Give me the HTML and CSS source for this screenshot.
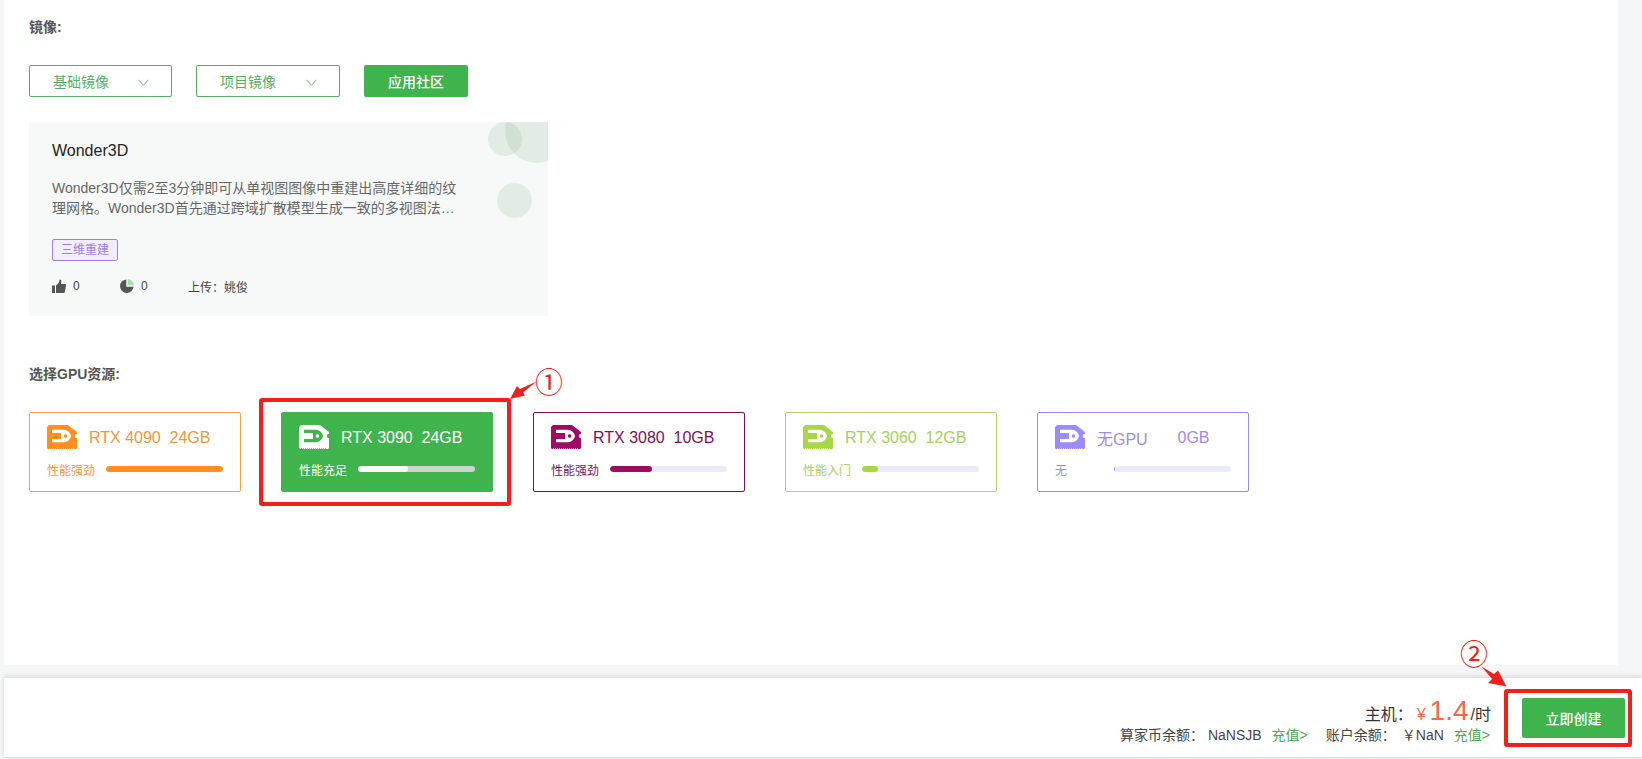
FILE: index.html
```html
<!DOCTYPE html>
<html lang="zh-CN">
<head>
  <meta charset="UTF-8" />
  <title>创建实例</title>
  <link rel="stylesheet" href="styles.css">
</head>
<body>
  <svg class="defs">
    <symbol id="icon-gpu" viewBox="0 0 30 24">
      <path fill="currentColor" d="M2 0H21L30 7V8.800A2.200 2.200 0 0 0 30 13.200V23L29 24H1L0 23V2Z"/>
      <path fill="var(--hole)" d="M5 4.800H17C20.500 4.800 23.500 8 24 11C23.500 14 20.500 17.200 17 17.200H5V14H14V8H5Z"/>
      <circle cx="18.500" cy="11" r="1.800" fill="currentColor"/>
      <path fill="var(--hole)" d="M2 23h.7v1h-.7zM4 23h.7v1h-.7zM6 23h.7v1h-.7zM8 23h.7v1h-.7zM10 23h.7v1h-.7zM12 23h.7v1h-.7zM14 23h.7v1h-.7zM16 23h.7v1h-.7zM18 23h.7v1h-.7zM20 23h.7v1h-.7zM22 23h.7v1h-.7zM24 23h.7v1h-.7zM26 23h.7v1h-.7z"/>
    </symbol>
  </svg>

  <div class="main">
    <p class="label">镜像:</p>

    <div class="mirror-btns">
      <div class="select">
        <span>基础镜像</span>
        <svg class="chevron" viewBox="0 0 10 6"><path d="M0.500 0.500L5 5.500L9.500 0.500"/></svg>
      </div>
      <div class="select">
        <span>项目镜像</span>
        <svg class="chevron" viewBox="0 0 10 6"><path d="M0.500 0.500L5 5.500L9.500 0.500"/></svg>
      </div>
      <button class="btn-community">应用社区</button>
    </div>

    <div class="app-card">
      <i class="dot dot1"></i>
      <i class="dot dot2"></i>
      <i class="dot dot3"></i>
      <h3>Wonder3D</h3>
      <p class="desc">Wonder3D仅需2至3分钟即可从单视图图像中重建出高度详细的纹理网格。Wonder3D首先通过跨域扩散模型生成一致的多视图法…</p>
      <span class="tag">三维重建</span>
      <div class="stats">
        <span class="stat">
          <svg viewBox="0 0 14 14"><path fill="#555" d="M0 6.500H3V14H0ZM4 6.500L7 3.500L7.500 0.500C9 0.200 9.600 1.500 9.300 3L8.900 5H13C14 5 14.200 6 14 6.800L12.800 13C12.600 13.700 12.200 14 11.500 14H4Z"/></svg>
          0
        </span>
        <span class="stat">
          <svg viewBox="0 0 14 14"><path fill="#555" d="M6.300 0.400V7.700H13.600A6.800 6.800 0 1 1 6.300 0.400Z"/><path fill="#a9dcae" d="M7.700 0A6.500 6.500 0 0 1 14 6.300H7.700Z"/></svg>
          0
        </span>
        <span class="uploader">上传：姚俊</span>
      </div>
    </div>

    <p class="label label-gpu">选择GPU资源:</p>

    <div class="gpu-list">
      <div class="gpu gpu-orange">
        <div class="gpu-head">
          <svg class="gpu-icon"><use href="#icon-gpu"/></svg>
          <span class="gpu-name">RTX 4090</span>
          <span>24GB</span>
        </div>
        <div class="gpu-perf">
          <span class="perf-text">性能强劲</span>
          <div class="bar"><div class="fill" style="width:100%"></div></div>
        </div>
      </div>
      <div class="gpu gpu-active">
        <div class="gpu-head">
          <svg class="gpu-icon"><use href="#icon-gpu"/></svg>
          <span class="gpu-name">RTX 3090</span>
          <span>24GB</span>
        </div>
        <div class="gpu-perf">
          <span class="perf-text">性能充足</span>
          <div class="bar"><div class="fill" style="width:43%"></div></div>
        </div>
      </div>
      <div class="gpu gpu-wine">
        <div class="gpu-head">
          <svg class="gpu-icon"><use href="#icon-gpu"/></svg>
          <span class="gpu-name">RTX 3080</span>
          <span>10GB</span>
        </div>
        <div class="gpu-perf">
          <span class="perf-text">性能强劲</span>
          <div class="bar"><div class="fill" style="width:36%"></div></div>
        </div>
      </div>
      <div class="gpu gpu-lime">
        <div class="gpu-head">
          <svg class="gpu-icon"><use href="#icon-gpu"/></svg>
          <span class="gpu-name">RTX 3060</span>
          <span>12GB</span>
        </div>
        <div class="gpu-perf">
          <span class="perf-text">性能入门</span>
          <div class="bar"><div class="fill" style="width:14%"></div></div>
        </div>
      </div>
      <div class="gpu gpu-violet">
        <div class="gpu-head">
          <svg class="gpu-icon"><use href="#icon-gpu"/></svg>
          <span class="gpu-name">无GPU</span>
          <span>0GB</span>
        </div>
        <div class="gpu-perf">
          <span class="perf-text">无</span>
          <div class="bar"><div class="fill" style="width:1%"></div></div>
        </div>
      </div>
    </div>
  </div>

  <div class="footer">
    <div class="price">
      <div class="price-row">
        主机：<span class="yen">¥</span><span class="amount">1.4</span>/时
      </div>
      <div class="balance-row">
        <span>算家币余额：</span>
        <span class="balance-value">NaNSJB</span>
        <a class="recharge">充值&gt;</a>
        <span class="balance-second">账户余额：</span>
        <span class="balance-cash">￥NaN</span>
        <a class="recharge">充值&gt;</a>
      </div>
    </div>
    <button class="btn-create">立即创建</button>
  </div>

  <!-- 操作步骤标注 -->
  <div class="mark mark-box1"></div>
  <span class="mark-num mark-num1">①</span>
  <svg class="mark-arrow arrow1" viewBox="0 0 28 20"><path d="M1 19L8 6L11 9L27.500 1.500L14 12.500L16 15.500Z"/></svg>
  <div class="mark mark-box2"></div>
  <span class="mark-num mark-num2">②</span>
  <svg class="mark-arrow arrow2" viewBox="0 0 26 21"><path d="M0.500 0.500L13 8L17 4.500L25.500 20.500L7 17L11 13Z"/></svg>
</body>
</html>
```

FILE: styles.css
```css
* {
  box-sizing: border-box;
}

html, body {
  height: 759px;
}

body {
  margin: 0;
  padding-left: 4px;
  overflow: hidden;
  position: relative;
  background-color: #f5f6f7;
  font-family: "Liberation Sans", "Noto Sans CJK SC", sans-serif;
  color: #333;
}

.defs {
  display: none;
}

.main {
  width: 1614px;
  height: 665px;
  padding: 18px 25px 0;
  background: #fff;
}

.label {
  margin: 0;
  font-size: 14px;
  line-height: 18px;
  font-weight: bold;
  color: #555;
}

.mirror-btns {
  display: flex;
  gap: 24px;
  margin-top: 29px;
}

.select {
  width: 143px;
  height: 32px;
  padding: 0 22px 0 23px;
  display: flex;
  align-items: center;
  justify-content: space-between;
  border: 1px solid #5aa963;
  border-radius: 2px;
  font-size: 14px;
  color: #55b05f;
}

.select + .select {
  width: 144px;
}

.chevron {
  width: 11px;
  height: 7px;
  margin-top: 3px;
  fill: none;
  stroke: #6fae76;
  stroke-width: 0.900;
}

.btn-community {
  width: 104px;
  height: 32px;
  border: none;
  border-radius: 2px;
  background-color: #40b44c;
  color: #fff;
  font: inherit;
  font-size: 14px;
  font-weight: 500;
}

.app-card {
  position: relative;
  overflow: hidden;
  width: 519px;
  height: 194px;
  margin-top: 25px;
  padding: 19px 23px 0;
  background-color: #f7f9f9;
}

.dot {
  position: absolute;
  border-radius: 50%;
  background-color: rgba(64, 140, 76, 0.11);
}

.dot1 {
  left: 459px;
  top: 0;
  width: 34px;
  height: 34px;
}

.dot2 {
  left: 476px;
  top: -23px;
  width: 64px;
  height: 64px;
}

.dot3 {
  left: 468px;
  top: 61px;
  width: 35px;
  height: 35px;
}

.app-card h3 {
  margin: 0;
  font-size: 16px;
  line-height: 20px;
  font-weight: normal;
  color: #222;
}

.desc {
  width: 410px;
  margin: 17px 0 0;
  font-size: 14px;
  line-height: 20px;
  color: #666;
}

.tag {
  display: inline-block;
  height: 22px;
  margin-top: 21px;
  padding: 0 8px;
  border: 1px solid #a07fdc;
  border-radius: 2px;
  background-color: #f1edfb;
  font-size: 12px;
  line-height: 20px;
  color: #a07fdc;
}

.stats {
  display: flex;
  align-items: center;
  height: 16px;
  margin-top: 17px;
  font-size: 12px;
  color: #444;
}

.stat {
  width: 68px;
  display: flex;
  align-items: center;
  gap: 7px;
}

.stat svg {
  width: 14px;
  height: 14px;
}

.gpu-list {
  display: flex;
  gap: 40px;
  margin-top: 29px;
}

.label-gpu {
  margin-top: 49px;
}

.gpu {
  --hole: #fff;
  width: 212px;
  height: 80px;
  padding: 12px 17px 0 17px;
  border: 1px solid;
  border-radius: 2px;
  background-color: #fff;
}

.gpu-head {
  display: flex;
  align-items: center;
  height: 24px;
  font-size: 16px;
}

.gpu-head span {
  padding-top: 2px;
}

.gpu-icon {
  width: 30px;
  height: 24px;
  margin-right: 12px;
  color: var(--solid);
}

.gpu-name {
  min-width: 72px;
  margin-right: 8.500px;
}

.gpu-perf {
  display: flex;
  align-items: center;
  height: 16px;
  margin-top: 12px;
  font-size: 12px;
}

.perf-text {
  width: 59px;
}

.bar {
  flex: 1;
  height: 6px;
  border-radius: 3px;
  background-color: #e9ecf5;
  overflow: hidden;
}

.fill {
  height: 100%;
  border-radius: 3px;
  background-color: var(--solid);
}

.gpu-orange {
  --solid: #ff8f1f;
  border-color: #f0a44c;
  color: #f0963c;
}

.gpu-active {
  --solid: #fff;
  --hole: #40b44c;
  border-color: #40b44c;
  background-color: #40b44c;
  color: #fff;
}

.gpu-active .bar {
  background-color: #cfd3cf;
}

.gpu-wine {
  --solid: #a00a62;
  border-color: #7d0f5a;
  color: #7d0f5a;
}

.gpu-lime {
  --solid: #a6d843;
  border-color: #b3d56a;
  color: #a6d060;
}

.gpu-violet {
  --solid: #9c8bfa;
  border-color: #9c8be0;
  color: #9c8be8;
}

.footer {
  display: flex;
  justify-content: flex-end;
  align-items: flex-start;
  gap: 32px;
  height: 80px;
  margin-top: 13px;
  padding: 20px 17px 0 0;
  background: #fff;
  border-bottom: 1px solid #ddd;
  box-shadow: 0 -2px 5px rgba(0, 0, 0, 0.12);
}

.price {
  text-align: right;
}

.price-row {
  display: flex;
  justify-content: flex-end;
  align-items: baseline;
  height: 26px;
  margin-right: -1px;
  font-size: 16px;
  line-height: 26px;
  color: #333;
}

.yen {
  margin-left: 4px;
  font-size: 16px;
  color: #f4684a;
}

.amount {
  margin: 0 2px 0 4px;
  font-size: 28px;
  color: #f4684a;
}

.balance-row {
  display: flex;
  justify-content: flex-end;
  margin-top: 1px;
  font-size: 14px;
  line-height: 20px;
  color: #444;
}

.balance-value {
  margin-left: 4px;
}

.balance-second {
  margin-left: 18px;
}

.balance-cash {
  margin-left: 6px;
}

.recharge {
  margin-left: 10px;
  color: #4aa856;
}

.btn-create {
  width: 103px;
  height: 40px;
  border: none;
  border-radius: 2px;
  background-color: #40b44c;
  color: #fff;
  font: inherit;
  font-size: 14px;
  font-weight: 500;
}

/* 步骤标注 */
.mark {
  position: absolute;
  border: 4px solid #f0201a;
  border-radius: 3px;
}

.mark-box1 {
  left: 259px;
  top: 398px;
  width: 252px;
  height: 108px;
}

.mark-box2 {
  left: 1504px;
  top: 689px;
  width: 128px;
  height: 58px;
}

.mark-num {
  position: absolute;
  font-size: 28px;
  line-height: 28px;
  color: #f0201a;
}

.mark-num1 {
  left: 535px;
  top: 370px;
}

.mark-num2 {
  left: 1460px;
  top: 642px;
}

.mark-arrow {
  position: absolute;
  fill: #f0201a;
}

.arrow1 {
  left: 509px;
  top: 380px;
  width: 28px;
  height: 20px;
}

.arrow2 {
  left: 1481px;
  top: 666px;
  width: 26px;
  height: 21px;
}
```
